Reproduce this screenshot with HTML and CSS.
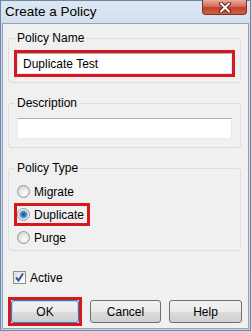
FILE: index.html
```html
<!DOCTYPE html>
<html>

<head>
	<link rel="stylesheet" href="styles.css">
</head>

<body>
	<div class="window">
		<div class="titlebar">
			<span class="title">Create a Policy</span>
			<span class="closebutton">
				<svg width="16" height="11" viewBox="0 0 16 11">
					<path d="M4 1.5 L12 9.5 M12 1.5 L4 9.5" stroke="#6b2418" stroke-width="4" stroke-linecap="round" />
					<path d="M4 1.5 L12 9.5 M12 1.5 L4 9.5" stroke="#ffffff" stroke-width="2" stroke-linecap="round" />
				</svg>
			</span>
		</div>
		<div class="client">
			<fieldset class="group first">
				<legend>Policy Name</legend>
				<div class="field highlight">
					<div class="textbox">Duplicate Test</div>
				</div>
			</fieldset>
			<fieldset class="group">
				<legend>Description</legend>
				<div class="field">
					<div class="textbox"></div>
				</div>
			</fieldset>
			<fieldset class="group">
				<legend>Policy Type</legend>
				<div class="options">
					<div class="option"><span class="radio"></span>Migrate</div>
					<div class="option highlight"><span class="radio selected"></span>Duplicate</div>
					<div class="option"><span class="radio"></span>Purge</div>
				</div>
			</fieldset>
			<div class="checkrow">
				<span class="checkbox">
					<svg width="11" height="11" viewBox="0 0 11 11">
						<path d="M2 5.5 L4.5 8.5 L9 1.5" fill="none" stroke="#3a5795" stroke-width="2" />
					</svg>
				</span>
				Active
			</div>
			<div class="buttons">
				<div class="highlight">
					<div class="button default">OK</div>
				</div>
				<div class="button">Cancel</div>
				<div class="button wide">Help</div>
			</div>
		</div>
	</div>
</body>

</html>
```

FILE: styles.css
```css
body {
	margin: 0;
	font: 12px "Liberation Sans", Arial, sans-serif;
	color: #000000;
}

.window {
	width: 251px;
	height: 331px;
	box-sizing: border-box;
	border: 1px solid #6f87a6;
	padding: 0 1px 1px 1px;
	background: linear-gradient(#dde7f2, #c9d8ea 40px, #c6d6e9);
	display: flex;
	flex-direction: column;
}

.titlebar {
	height: 22px;
	display: flex;
	justify-content: space-between;
	align-items: flex-start;
}

.title {
	font-size: 13.5px;
	padding: 3px 0 0 3px;
}

.closebutton {
	width: 45px;
	height: 15px;
	margin: -1px 2px 0 0;
	box-sizing: border-box;
	border: 1px solid #7b3326;
	border-top: none;
	border-radius: 0 0 4px 4px;
	background: linear-gradient(#e9ab9c, #d66e58 45%, #c2402a 55%, #d0614a);
	display: flex;
	justify-content: center;
	align-items: center;
}

.client {
	flex: 1;
	background-color: #f0f0f0;
	border: 1px solid #8ea3bd;
	display: flex;
	flex-direction: column;
}

.group {
	width: 233px;
	box-sizing: border-box;
	margin: 12px 0 0 5px;
	padding: 0 8px 8px 8px;
	border: 1px solid #d5dfe5;
	border-radius: 3px;
	min-width: 0;
}

.group.first {
	margin-top: 6px;
}

legend {
	padding: 0 2px;
	margin-left: -2px;
	line-height: 16px;
}

.field {
	margin-top: 7px;
}

.textbox {
	height: 21px;
	box-sizing: border-box;
	background-color: #ffffff;
	border: 1px solid #e3e9ef;
	border-top-color: #abadb3;
	padding: 3px 0 0 5px;
}

.highlight {
	border: 3px solid #d7161d;
	margin: -3px;
}

.field.highlight {
	margin-top: 4px;
}

.options {
	display: flex;
	flex-direction: column;
	align-items: flex-start;
	gap: 6px;
	margin-top: 7px;
	margin-bottom: -4px;
}

.option {
	height: 17px;
	display: flex;
	align-items: center;
	gap: 4px;
	padding-right: 3px;
}

.radio {
	width: 13px;
	height: 13px;
	box-sizing: border-box;
	border: 1px solid #969696;
	border-radius: 50%;
	background: radial-gradient(circle at 60% 65%, #ffffff, #dadada 70%, #c8c8c8);
}

.radio.selected {
	background: radial-gradient(circle, #12507f 0, #3d88c4 2.5px, #8cbce2 4px, #eaeaea 4.6px, #ffffff 6px);
}

.checkrow {
	display: flex;
	align-items: center;
	gap: 4px;
	height: 17px;
	margin: 18px 0 0 10px;
}

.checkbox {
	width: 13px;
	height: 13px;
	box-sizing: border-box;
	border: 1px solid #8f8f8f;
	background: linear-gradient(135deg, #dcdcdc, #ffffff);
	display: flex;
	justify-content: center;
	align-items: center;
}

.buttons {
	display: flex;
	gap: 8px;
	margin: 14px 0 0 8px;
}

.buttons .highlight {
	margin-right: 0;
}

.button {
	width: 71px;
	height: 23px;
	box-sizing: border-box;
	border: 1px solid #707070;
	border-radius: 3px;
	background: linear-gradient(#f2f2f2, #ebebeb 50%, #dddddd 51%, #cfcfcf);
	display: flex;
	justify-content: center;
	align-items: center;
}

.button.wide {
	width: 73px;
}

.button.default {
	width: 68px;
	border-color: #3c7fb1;
	box-shadow: inset 0 0 0 1px #a9dbf6;
}
```
